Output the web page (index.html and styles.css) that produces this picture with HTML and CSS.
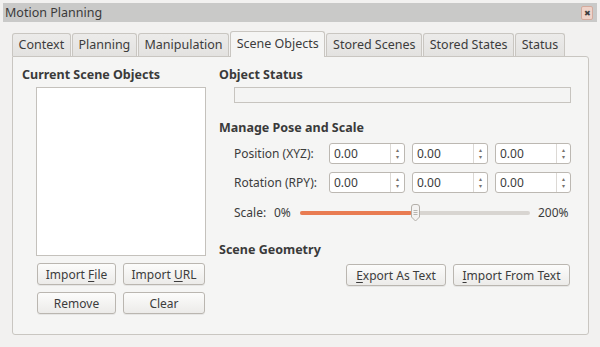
FILE: index.html
```html
<!DOCTYPE html>
<html lang="en">
<head>
    <meta charset="UTF-8">
    <title>Motion Planning</title>
    <link rel="stylesheet" href="styles.css">
</head>
<body>
    <div class="titlebar">
        <span class="title">Motion Planning</span>
        <span class="close">&#10006;</span>
    </div>

    <div class="tabs">
        <div class="tab">Context</div>
        <div class="tab">Planning</div>
        <div class="tab">Manipulation</div>
        <div class="tab active">Scene Objects</div>
        <div class="tab">Stored Scenes</div>
        <div class="tab">Stored States</div>
        <div class="tab">Status</div>
    </div>

    <div class="pane">
        <div class="left">
            <h3>Current Scene Objects</h3>
            <div class="listbox"></div>
            <div class="btn-grid">
                <button>Import <u>F</u>ile</button>
                <button>Import <u>U</u>RL</button>
                <button>Remove</button>
                <button>Clear</button>
            </div>
        </div>

        <div class="right">
            <h3>Object Status</h3>
            <div class="status"></div>

            <h3 class="gap">Manage Pose and Scale</h3>
            <div class="pose">
                <span class="lbl">Position (XYZ):</span>
                <div class="spin"><span class="val">0.00</span><span class="arrows"><i>&#9652;</i><i>&#9662;</i></span></div>
                <div class="spin"><span class="val">0.00</span><span class="arrows"><i>&#9652;</i><i>&#9662;</i></span></div>
                <div class="spin"><span class="val">0.00</span><span class="arrows"><i>&#9652;</i><i>&#9662;</i></span></div>

                <span class="lbl">Rotation (RPY):</span>
                <div class="spin"><span class="val">0.00</span><span class="arrows"><i>&#9652;</i><i>&#9662;</i></span></div>
                <div class="spin"><span class="val">0.00</span><span class="arrows"><i>&#9652;</i><i>&#9662;</i></span></div>
                <div class="spin"><span class="val">0.00</span><span class="arrows"><i>&#9652;</i><i>&#9662;</i></span></div>
            </div>

            <div class="scale">
                <span class="scale-lbl">Scale:</span>
                <span class="scale-min">0%</span>
                <div class="slider">
                    <div class="fill"></div>
                    <svg class="handle" width="11" height="18" viewBox="0 0 11 18">
                        <path d="M1.5 3 Q1.5 0.5 4 0.5 L7 0.5 Q9.5 0.5 9.5 3 L9.5 13 L5.5 17 L1.5 13 Z" fill="#f4f3f2" stroke="#b3afa9"/>
                        <path d="M3.5 6.5 H7.5 M3.5 8.5 H7.5 M3.5 10.5 H7.5" stroke="#aaa6a0" stroke-width="0.8"/>
                    </svg>
                </div>
                <span class="scale-max">200%</span>
            </div>

            <h3 class="gap2">Scene Geometry</h3>
            <div class="geo-btns">
                <button><u>E</u>xport As Text</button>
                <button><u>I</u>mport From Text</button>
            </div>
        </div>
    </div>
</body>
</html>
```

FILE: styles.css
```css
body {
    margin: 0;
    background-color: #f2f1f0;
    font-family: "Noto Sans", "Open Sans", sans-serif;
    font-size: 12px;
    color: #3c3c3c;
    width: 600px;
    height: 347px;
    overflow: hidden;
}

.titlebar {
    margin: 3px 3px 0;
    height: 19px;
    background-color: #c9c9c8;
    display: flex;
    align-items: center;
    justify-content: space-between;
    padding: 0 4px 0 2px;
}

.title {
    font-size: 12.5px;
    color: #3a3a3a;
}

.close {
    width: 10px;
    height: 12px;
    background-color: #efd3c9;
    border: 1px solid #d4ab9e;
    border-radius: 2px;
    font-size: 8px;
    line-height: 12px;
    text-align: center;
    color: #3e3e3e;
}

/* tab strip */
.tabs {
    display: flex;
    align-items: flex-end;
    margin: 9px 0 0 12px;
    height: 25px;
}

.tab {
    flex-shrink: 0;
    white-space: nowrap;
    height: 23px;
    box-sizing: border-box;
    padding: 0 5.6px;
    line-height: 22px;
    font-size: 12.5px;
    border: 1px solid #c9c6c1;
    border-bottom: none;
    border-radius: 3px 3px 0 0;
    background: linear-gradient(#ecebea, #e3e2e0);
    margin-right: 1px;
}

.tab.active {
    height: 26px;
    margin-bottom: -1px;
    line-height: 24px;
    background: #f5f5f4;
    position: relative;
    z-index: 1;
}

/* main pane */
.pane {
    margin-left: 12px;
    width: 577px;
    height: 279px;
    box-sizing: border-box;
    border: 1px solid #c9c6c1;
    border-radius: 0 3px 3px 3px;
    background-color: #f5f5f4;
    display: flex;
    gap: 13px;
    padding-left: 9px;
}

h3 {
    margin: 10px 0 0;
    font-size: 12.5px;
    line-height: 15px;
    font-weight: bold;
    color: #3a3a3a;
}

.left {
    width: 184px;
}

.listbox {
    margin: 5px 0 0 14px;
    width: 170px;
    height: 169px;
    box-sizing: border-box;
    background-color: #fff;
    border: 1px solid #c4c1bc;
}

.btn-grid {
    margin: 7px 0 0 15px;
    display: grid;
    grid-template-columns: 79px 82px;
    grid-auto-rows: 22px;
    gap: 7px;
}

button {
    font-family: inherit;
    font-size: 12px;
    color: #3c3c3c;
    border: 1px solid #bab6b0;
    border-radius: 3px;
    background: linear-gradient(#fcfcfb, #ecebe9);
    box-shadow: 0 1px 0 rgba(0, 0, 0, 0.06);
    padding: 0;
    height: 22px;
}

button u {
    text-decoration-thickness: 1px;
    text-underline-offset: 2px;
}

.right {
    width: 352px;
}

.status {
    margin: 5px 0 0 15px;
    height: 16px;
    box-sizing: border-box;
    border: 1px solid #c7c4bf;
    background-color: #f4f4f3;
}

h3.gap {
    margin-top: 17px;
}

.pose {
    margin: 8px 0 0 15px;
    display: grid;
    grid-template-columns: 88px 76px 76px 76px;
    grid-auto-rows: 21px;
    column-gap: 7px;
    row-gap: 8px;
    align-items: center;
}

.pose .lbl {
    white-space: nowrap;
}

.spin {
    height: 21px;
    box-sizing: border-box;
    display: flex;
    border: 1px solid #bcb8b2;
    border-radius: 3px;
    background-color: #fff;
}

.spin .val {
    flex: 1;
    padding-left: 4px;
    line-height: 19px;
}

.spin .arrows {
    width: 13px;
    border-left: 1px solid #dcd9d5;
    display: flex;
    flex-direction: column;
    align-items: center;
    justify-content: center;
    color: #77736e;
}

.spin .arrows i {
    font-style: normal;
    font-size: 6px;
    line-height: 7px;
}

.scale {
    margin: 11px 0 0 15px;
    height: 17px;
    display: flex;
    align-items: center;
}

.scale-lbl {
    width: 40px;
}

.scale-min {
    width: 24px;
}

.slider {
    position: relative;
    margin-left: 2px;
    width: 230px;
    height: 4px;
    border-radius: 2px;
    background-color: #d8d5d1;
}

.slider .fill {
    width: 112px;
    height: 4px;
    border-radius: 2px;
    background-color: #e97c52;
}

.slider .handle {
    position: absolute;
    left: 110px;
    top: -7px;
}

.scale-max {
    margin-left: 8px;
}

h3.gap2 {
    margin-top: 21px;
}

.geo-btns {
    margin-top: 7px;
    display: flex;
    justify-content: flex-end;
    gap: 7px;
    padding-right: 1px;
}

.geo-btns button:first-child {
    width: 100px;
}

.geo-btns button:last-child {
    width: 117px;
}
```
